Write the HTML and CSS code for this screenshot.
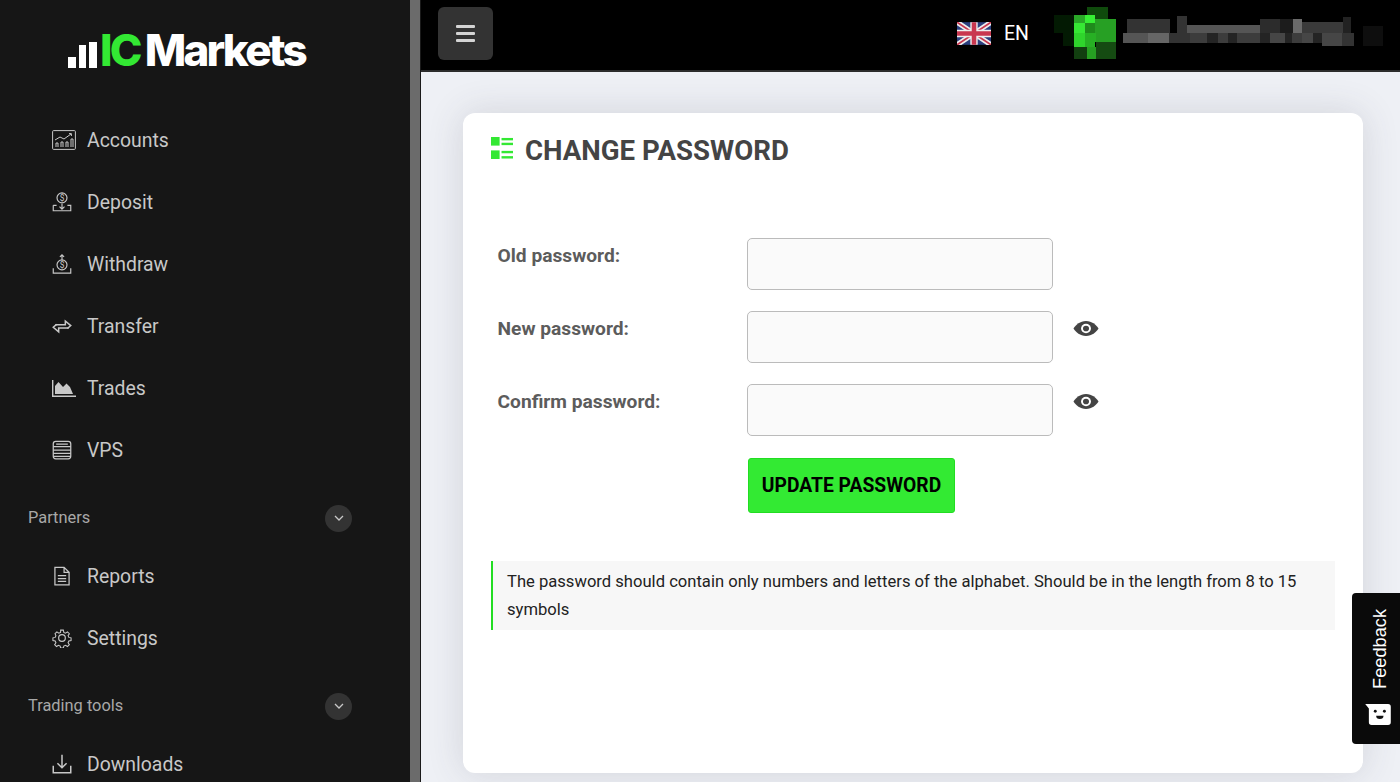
FILE: index.html
```html
<!DOCTYPE html>
<html lang="en">
<head>
  <meta charset="UTF-8">
  <title>Change Password</title>
  <link rel="stylesheet" href="styles.css">
</head>
<body>
<div class="layout">
  <aside class="sidebar">
    <div class="logo">
      <svg class="logo-bars" width="29" height="26" viewBox="0 0 29 26"><g fill="#fff"><rect x="0" y="15" width="8" height="11"/><rect x="11" y="3" width="7" height="23"/><rect x="21" y="0" width="8" height="26"/></g></svg>
      <span class="logo-ic">IC</span><span class="logo-markets">Markets</span>
    </div>
    <nav class="nav">
      <a class="nav-item">
        <svg class="nav-icon wide" viewBox="0 0 24 20" fill="none" stroke="#c8c8c8"><rect x=".6" y=".6" width="22.8" height="18.800" rx="1"/><path d="M3 10l5-3 4 2 7-5M17 3.600h2.400V6"/><path d="M4 17v-4h2v4M9 17v-5h2v5M14 17v-5h2v5M19 17V9h2v8"/></svg>
        <span>Accounts</span>
      </a>
      <a class="nav-item">
        <svg class="nav-icon" viewBox="0 0 24 24" fill="none" stroke="#c8c8c8" stroke-width="1.400"><circle cx="12" cy="7" r="6"/><text x="12" y="10.500" class="icon-dollar">$</text><path d="M1.500 16v6.500h21V16h-4M5.500 16h-4M12 14v6M9 17.500l3 3 3-3"/></svg>
        <span>Deposit</span>
      </a>
      <a class="nav-item">
        <svg class="nav-icon" viewBox="0 0 24 24" fill="none" stroke="#c8c8c8" stroke-width="1.400"><circle cx="12" cy="13" r="6"/><text x="12" y="16.500" class="icon-dollar">$</text><path d="M1.500 17v6h21v-6M12 7V1M9.500 3.500L12 1l2.500 2.500"/></svg>
        <span>Withdraw</span>
      </a>
      <a class="nav-item">
        <svg class="nav-icon" viewBox="0 0 24 24" fill="none" stroke="#c8c8c8" stroke-width="1.800"><path d="M4 10.500h12V6l6.500 5.500-4 3.500"/><path d="M20 14.500H8V19l-6.500-5.500 4-3.500"/></svg>
        <span>Transfer</span>
      </a>
      <a class="nav-item">
        <svg class="nav-icon wide" viewBox="0 0 24 20"><path d="M.7 2v16.300H24" fill="none" stroke="#c8c8c8" stroke-width="1.400"/><path d="M3 16V8l3.500-4 4.500 5 3.500-3.500L18 9l3 7z" fill="#c8c8c8"/></svg>
        <span>Trades</span>
      </a>
      <a class="nav-item">
        <svg class="nav-icon" viewBox="0 0 24 24" fill="none" stroke="#c8c8c8" stroke-width="1.500"><rect x="1.500" y="1.500" width="21" height="21" rx="3"/><path d="M1.500 8h21M1.500 12h21M1.500 16h21M1.500 19.500h21M5 5h14"/></svg>
        <span>VPS</span>
      </a>

      <div class="nav-group">
        <span>Partners</span>
        <span class="chevron"><svg width="10" height="6" viewBox="0 0 10 6" fill="none" stroke="#c8c8c8" stroke-width="1.300"><path d="M1 1l4 4 4-4"/></svg></span>
      </div>

      <a class="nav-item">
        <svg class="nav-icon" viewBox="0 0 24 24" fill="none" stroke="#c8c8c8" stroke-width="1.500"><path d="M3.500 1.500h11l6 6v15h-17zM14.500 1.500v6h6M7 11.500h10M7 15h10M7 18.500h10"/></svg>
        <span>Reports</span>
      </a>
      <a class="nav-item">
        <svg class="nav-icon" viewBox="0 0 24 24" fill="none" stroke="#c8c8c8" stroke-width="1.400"><circle cx="12" cy="12" r="4"/><path d="M10.200 1.500h3.600l.6 3 2.300 1 2.600-1.700 2.500 2.500-1.700 2.600 1 2.300 3 .6v3.600l-3 .6-1 2.300 1.700 2.600-2.500 2.500-2.600-1.700-2.300 1-.6 2.800h-3.600l-.6-2.800-2.300-1-2.600 1.700-2.500-2.500 1.700-2.600-1-2.300-3-.6v-3.600l3-.6 1-2.300L2.700 6.300l2.500-2.500 2.600 1.700 2.300-1z" transform="translate(1.200 1.200) scale(.9)"/></svg>
        <span>Settings</span>
      </a>

      <div class="nav-group">
        <span>Trading tools</span>
        <span class="chevron"><svg width="10" height="6" viewBox="0 0 10 6" fill="none" stroke="#c8c8c8" stroke-width="1.300"><path d="M1 1l4 4 4-4"/></svg></span>
      </div>

      <a class="nav-item">
        <svg class="nav-icon" viewBox="0 0 24 24" fill="none" stroke="#c8c8c8" stroke-width="1.800"><path d="M1.500 14v8.500h21V14M12 1v15M6.500 11l5.500 5.500 5.500-5.500"/></svg>
        <span>Downloads</span>
      </a>
    </nav>
  </aside>
  <div class="scroll-strip"></div>

  <div class="main">
    <header class="topbar">
      <button class="menu-btn" type="button" aria-label="Menu">
        <span></span><span></span><span></span>
      </button>
      <div class="topbar-right">
        <svg class="flag" width="34" height="23" viewBox="0 0 60 40">
          <rect width="60" height="40" fill="#2b3f7e"/>
          <path d="M0 0l60 40M60 0L0 40" stroke="#eee" stroke-width="9"/>
          <path d="M0 0l60 40M60 0L0 40" stroke="#c9374f" stroke-width="3"/>
          <path d="M30 0v40M0 20h60" stroke="#eee" stroke-width="13"/>
          <path d="M30 0v40M0 20h60" stroke="#c9374f" stroke-width="8"/>
        </svg>
        <span class="lang">EN</span>
        <!-- blurred account name, mosaic -->
        <svg class="mosaic" width="330" height="66" viewBox="1054 0 330 66" shape-rendering="crispEdges">
          <rect x="1054" y="15" width="20" height="18" fill="#031a03"/>
          <rect x="1063" y="33" width="11" height="13" fill="#031a03"/>
          <rect x="1087" y="7" width="21" height="12" fill="#0f4a0c"/>
          <rect x="1074" y="15" width="11" height="8" fill="#2aa828"/>
          <rect x="1074" y="23" width="11" height="10" fill="#36e834"/>
          <rect x="1074" y="33" width="11" height="14" fill="#2fd52c"/>
          <rect x="1085" y="15" width="10" height="8" fill="#36ee34"/>
          <rect x="1085" y="23" width="10" height="10" fill="#1f8a1c"/>
          <rect x="1085" y="33" width="10" height="14" fill="#27b024"/>
          <rect x="1095" y="19" width="21" height="23" fill="#27a024"/>
          <rect x="1095" y="33" width="1" height="9" fill="#27b024"/>
          <rect x="1074" y="47" width="13" height="12" fill="#123f10"/>
          <rect x="1087" y="47" width="9" height="12" fill="#26a022"/>
          <rect x="1096" y="42" width="20" height="17" fill="#154b12"/>
          <g fill="#333">
            <rect x="1127" y="19" width="43" height="14"/>
            <rect x="1177" y="16" width="10" height="17"/>
            <rect x="1169" y="33" width="21" height="10"/>
            <rect x="1342" y="33" width="12" height="13"/>
          </g>
          <rect x="1187" y="25" width="73" height="8" fill="#555"/>
          <rect x="1260" y="19" width="20" height="14" fill="#2c2c2c"/>
          <rect x="1280" y="19" width="13" height="14" fill="#1c1c1c"/>
          <rect x="1293" y="19" width="9" height="14" fill="#6a6a6a"/>
          <rect x="1302" y="22" width="41" height="11" fill="#3a3a3a"/>
          <rect x="1343" y="17" width="8" height="16" fill="#222"/>
          <rect x="1123" y="33" width="25" height="10" fill="#555"/>
          <rect x="1148" y="33" width="21" height="10" fill="#666"/>
          <g fill="#3c3c3c">
            <rect x="1190" y="33" width="17" height="10"/>
            <rect x="1218" y="33" width="10" height="10"/>
            <rect x="1237" y="33" width="23" height="10"/>
            <rect x="1292" y="33" width="10" height="10"/>
          </g>
          <g fill="#242424">
            <rect x="1207" y="33" width="11" height="10"/>
            <rect x="1228" y="33" width="9" height="10"/>
            <rect x="1260" y="33" width="10" height="10"/>
            <rect x="1285" y="33" width="7" height="10"/>
            <rect x="1313" y="33" width="9" height="10"/>
          </g>
          <g fill="#464646">
            <rect x="1270" y="33" width="15" height="10"/>
            <rect x="1302" y="33" width="11" height="10"/>
            <rect x="1322" y="33" width="20" height="13"/>
          </g>
          <rect x="1363" y="26" width="20" height="20" fill="#0e0e0e"/>
        </svg>
      </div>
    </header>

    <div class="content">
      <section class="card">
        <h1 class="card-title">
          <svg class="title-icon" width="22" height="22" viewBox="0 0 23 23" fill="#33e833"><rect width="9" height="9"/><rect y="14" width="9" height="9"/><rect x="11" y="1" width="12" height="2.500"/><rect x="11" y="6" width="12" height="2.500"/><rect x="11" y="14.500" width="12" height="2.500"/><rect x="11" y="20" width="12" height="2.500"/></svg>
          CHANGE PASSWORD
        </h1>
        <form class="form">
          <div class="form-row">
            <label>Old password:</label>
            <input type="password">
          </div>
          <div class="form-row">
            <label>New password:</label>
            <input type="password">
            <svg class="eye" width="26" height="15" viewBox="0 0 26 16" preserveAspectRatio="none"><path d="M13 0C7 0 3 4 .5 8 3 12 7 16 13 16s10-4 12.500-8C23 4 19 0 13 0z" fill="#444"/><circle cx="13" cy="8" r="5" fill="#fff"/><circle cx="13" cy="8" r="3" fill="#444"/></svg>
          </div>
          <div class="form-row">
            <label>Confirm password:</label>
            <input type="password">
            <svg class="eye" width="26" height="15" viewBox="0 0 26 16" preserveAspectRatio="none"><path d="M13 0C7 0 3 4 .5 8 3 12 7 16 13 16s10-4 12.500-8C23 4 19 0 13 0z" fill="#444"/><circle cx="13" cy="8" r="5" fill="#fff"/><circle cx="13" cy="8" r="3" fill="#444"/></svg>
          </div>
          <div class="form-row form-actions">
            <button class="update-btn" type="button">UPDATE PASSWORD</button>
          </div>
        </form>
        <p class="note">The password should contain only numbers and letters of the alphabet. Should be in the length from 8 to 15 symbols</p>
      </section>
    </div>
  </div>
</div>

<div class="feedback">
  <span class="feedback-text">Feedback</span>
  <svg width="28" height="21" viewBox="0 0 28 23"><path d="M0 0h25a3 3 0 0 1 3 3v17a3 3 0 0 1-3 3H7a3 3 0 0 1-3-3V5z" fill="#fff"/><circle cx="11" cy="8" r="1.600" fill="#111"/><circle cx="21" cy="8" r="1.600" fill="#111"/><path d="M12 13h8a4 3.500 0 0 1-8 0z" fill="#111"/></svg>
</div>
</body>
</html>
```

FILE: styles.css
```css
* {
    box-sizing: border-box;
}
html, body {
    margin: 0;
    height: 100%;
    overflow: hidden;
    font-family: Roboto, "Liberation Sans", sans-serif;
}
.layout {
    display: flex;
    height: 782px;
    overflow: hidden;
}

/* sidebar */
.sidebar {
    width: 410px;
    flex: none;
    background: #161616;
    color: #c8c8c8;
}
.scroll-strip {
    width: 11px;
    flex: none;
    background: #6b6b6b;
    border-right: 1px solid #1a1a1a;
}
.logo {
    display: flex;
    align-items: flex-end;
    height: 70px;
    padding-left: 68px;
    font-family: Inter, sans-serif;
    font-weight: 800;
    font-size: 44px;
    line-height: 40px;
    letter-spacing: -2.8px;
}
.logo-bars {
    margin-right: 3px;
    margin-bottom: 2px;
}
.logo-ic {
    color: #33e833;
    margin-right: 5px;
}
.logo-markets {
    color: #fff;
}
.nav {
    padding-top: 39px;
}
.nav-item {
    display: flex;
    align-items: center;
    height: 62px;
    padding-left: 52px;
    font-size: 19.4px;
}
.nav-icon {
    width: 20px;
    height: 20px;
    flex: none;
    margin-right: 15px;
}
.nav-icon.wide {
    width: 24px;
    margin-right: 11px;
}
.icon-dollar {
    font-family: Roboto, sans-serif;
    font-size: 10px;
    text-anchor: middle;
    fill: #c8c8c8;
    stroke: none;
}
.nav-group {
    display: flex;
    align-items: center;
    justify-content: space-between;
    height: 64px;
    padding: 8px 58px 0 28px;
    font-size: 16.4px;
    color: #a8a8a8;
}
.chevron {
    display: flex;
    align-items: center;
    justify-content: center;
    width: 27px;
    height: 27px;
    margin-top: 2px;
    border-radius: 50%;
    background: #333;
}

/* top bar */
.main {
    flex: 1;
    min-width: 0;
    background: #eef0f5;
}
.topbar {
    display: flex;
    align-items: center;
    justify-content: space-between;
    height: 72px;
    padding: 0 0 4px 17px;
    background: #000;
    border-bottom: 2px solid #2c2c2c;
}
.menu-btn {
    display: flex;
    flex-direction: column;
    align-items: center;
    justify-content: center;
    gap: 4px;
    width: 55px;
    height: 53px;
    padding: 0;
    border: 0;
    border-radius: 6px;
    background: #333;
}
.menu-btn span {
    display: block;
    width: 19px;
    height: 3px;
    border-radius: 1px;
    background: #d4d4d4;
}
.topbar-right {
    display: flex;
    align-items: center;
}
.flag {
    margin-right: 13px;
}
.lang {
    color: #fff;
    font-size: 19.5px;
    font-weight: 400;
    margin-right: 25px;
}
.mosaic {
    display: block;
    margin-right: 16px;
    flex: none;
}

/* card */
.content {
    padding: 41px 37px 0 42px;
}
.card {
    height: 660px;
    padding: 20px 28px 0 28px;
    background: #fff;
    border-radius: 12px;
    box-shadow: 0 0 36px rgba(60, 65, 80, .16);
}
.card-title {
    display: flex;
    align-items: center;
    gap: 12px;
    height: 34px;
    margin: 0 0 71px;
    font-size: 27.6px;
    font-weight: 700;
    color: #444;
}
.title-icon {
    margin-top: -5px;
}
.form-row {
    display: flex;
    align-items: flex-start;
    height: 73px;
    padding-left: 6.5px;
}
.form-row label {
    width: 249px;
    flex: none;
    padding-top: 6px;
    font-size: 19.2px;
    font-weight: 700;
    color: #5c5c5c;
}
.form-row input {
    width: 306px;
    height: 52px;
    flex: none;
    background: #fafafa;
    border: 1px solid #bbb;
    border-radius: 5px;
}
.eye {
    margin: 10px 0 0 20px;
}
.form-actions {
    height: 104px;
    padding-top: 1px;
    padding-left: 257px;
}
.update-btn {
    width: 207px;
    height: 55px;
    padding: 0;
    border: 1px solid #22dd22;
    border-radius: 3px;
    background: #33ea33;
    color: #000;
    font-family: inherit;
    font-size: 19.3px;
    font-weight: 700;
}
.note {
    width: 844px;
    height: 69px;
    margin: 0;
    padding: 7px 30px 0 14px;
    background: #f7f7f7;
    border-left: 2px solid #22dd22;
    font-size: 16.6px;
    line-height: 28px;
    color: #222;
}

/* feedback tab */
.feedback {
    position: fixed;
    top: 593px;
    left: 1352px;
    width: 48px;
    height: 151px;
    display: flex;
    flex-direction: column;
    align-items: center;
    justify-content: flex-end;
    gap: 15px;
    padding: 0 0 19px 4px;
    background: #0a0a0a;
    border-radius: 4px 0 0 4px;
    color: #fff;
}
.feedback-text {
    writing-mode: vertical-rl;
    transform: rotate(180deg);
    margin-left: 4px;
    font-family: "Liberation Sans", sans-serif;
    font-size: 18.2px;
}
```
